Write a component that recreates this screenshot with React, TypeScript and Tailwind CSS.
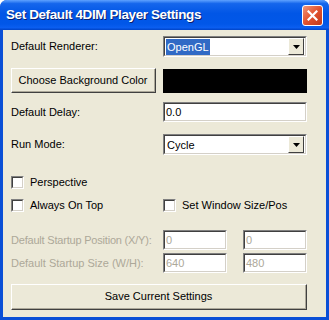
import React from 'react';

const sunken = 'border-t border-l border-t-[#808080] border-l-[#808080] border-b border-r border-b-white border-r-white';
const sunkenInner = 'border-t border-l border-t-[#404040] border-l-[#404040] border-b border-r border-b-[#d4d0c8] border-r-[#d4d0c8]';

function Arrow() {
  return (
    <div className="w-[16px] h-[17px] bg-[#ece9d8] border border-t-white border-l-white border-b-[#404040] border-r-[#404040] flex items-center justify-center">
      <svg width="7" height="4" viewBox="0 0 7 4"><path d="M0 0h7L3.5 4z" fill="#000" /></svg>
    </div>
  );
}

function Select({ value, selected }: { value: string; selected?: boolean }) {
  return (
    <div className={`w-[144px] h-[21px] ${sunken}`}>
      <div className={`w-full h-full bg-white flex items-center justify-between pr-[1px] ${sunkenInner}`}>
        <span className={`ml-[1px] px-[1px] h-[16px] leading-[16px] ${selected ? 'bg-[#316ac5] text-white' : 'text-black'}`}>{value}</span>
        <Arrow />
      </div>
    </div>
  );
}

function Input({ value, w, disabled }: { value: string; w: string; disabled?: boolean }) {
  return (
    <div className={`${w} h-[20px] ${sunken}`}>
      <div className={`w-full h-full bg-white flex items-center pl-[1px] ${sunkenInner} ${disabled ? 'text-[#aca899]' : 'text-black'}`}>{value}</div>
    </div>
  );
}

function Check({ label }: { label: string }) {
  return (
    <div className="flex items-center gap-[6px]">
      <div className={`w-[13px] h-[13px] ${sunken}`}>
        <div className={`w-full h-full bg-white ${sunkenInner}`} />
      </div>
      <span>{label}</span>
    </div>
  );
}

function Button({ label, w, h }: { label: string; w: string; h: string }) {
  return (
    <div className={`${w} ${h} border border-t-white border-l-white border-b-[#404040] border-r-[#404040]`}>
      <div className="w-full h-full bg-[#ece9d8] border-b border-r border-b-[#aca899] border-r-[#aca899] flex items-center justify-center">{label}</div>
    </div>
  );
}

export default function App() {
  return (
    <div className="w-[329px] h-[320px] bg-white font-['Liberation_Sans',Arial,sans-serif] text-[11px] text-black">
      <div className="w-full h-full rounded-t-[7px] bg-[#0a4fd6] flex flex-col overflow-hidden">
        {/* title bar */}
        <div className="h-[30px] shrink-0 flex items-center justify-between pl-[6px] pr-[6px] bg-[linear-gradient(to_bottom,#5fa2ff_0%,#1566ec_12%,#0156e6_45%,#0157e8_80%,#0a5ef0_92%,#0043c6_100%)]">
          <span className="text-white font-bold text-[13.5px] tracking-[-0.4px] [text-shadow:1px_1px_0_#0a1f6e]">Set Default 4DIM Player Settings</span>
          <div className="w-[21px] h-[21px] rounded-[3px] border border-white bg-[linear-gradient(135deg,#f0977a_0%,#e2522e_50%,#c0391b_100%)] flex items-center justify-center">
            <svg width="11" height="11" viewBox="0 0 11 11"><path d="M1.5 1.5l8 8M9.5 1.5l-8 8" stroke="#fff" strokeWidth="2.2" strokeLinecap="square" /></svg>
          </div>
        </div>
        {/* body */}
        <div className="flex-1 mx-[3px] mb-[3px] bg-[#ece9d8] pl-[8px] pr-[19px] flex flex-col">
          <div className="mt-[6px] flex items-center h-[21px]">
            <span className="w-[152px]">Default Renderer:</span>
            <Select value="OpenGL" selected />
          </div>
          <div className="mt-[11px] flex items-center h-[25px]">
            <Button label="Choose Background Color" w="w-[145px]" h="h-[25px]" />
            <div className="ml-[7px] w-[144px] h-[24px] bg-black" />
          </div>
          <div className="mt-[9px] flex items-center h-[20px]">
            <span className="w-[152px]">Default Delay:</span>
            <Input value="0.0" w="w-[144px]" />
          </div>
          <div className="mt-[12px] flex items-center h-[21px]">
            <span className="w-[152px]">Run Mode:</span>
            <Select value="Cycle" />
          </div>
          <div className="mt-[21px] flex items-center h-[13px]">
            <Check label="Perspective" />
          </div>
          <div className="mt-[10px] flex items-center h-[13px]">
            <div className="w-[152px]"><Check label="Always On Top" /></div>
            <Check label="Set Window Size/Pos" />
          </div>
          <div className="mt-[18px] flex items-center h-[20px] text-[#aca899]">
            <span className="w-[152px] whitespace-nowrap tracking-[-0.2px]">Default Startup Position (X/Y):</span>
            <Input value="0" w="w-[64px]" disabled />
            <div className="ml-[16px]"><Input value="0" w="w-[64px]" disabled /></div>
          </div>
          <div className="mt-[3px] flex items-center h-[20px] text-[#aca899]">
            <span className="w-[152px] whitespace-nowrap">Default Startup Size (W/H):</span>
            <Input value="640" w="w-[64px]" disabled />
            <div className="ml-[16px]"><Input value="480" w="w-[64px]" disabled /></div>
          </div>
          <div className="mt-[11px]">
            <Button label="Save Current Settings" w="w-[296px]" h="h-[26px]" />
          </div>
        </div>
      </div>
    </div>
  );
}
